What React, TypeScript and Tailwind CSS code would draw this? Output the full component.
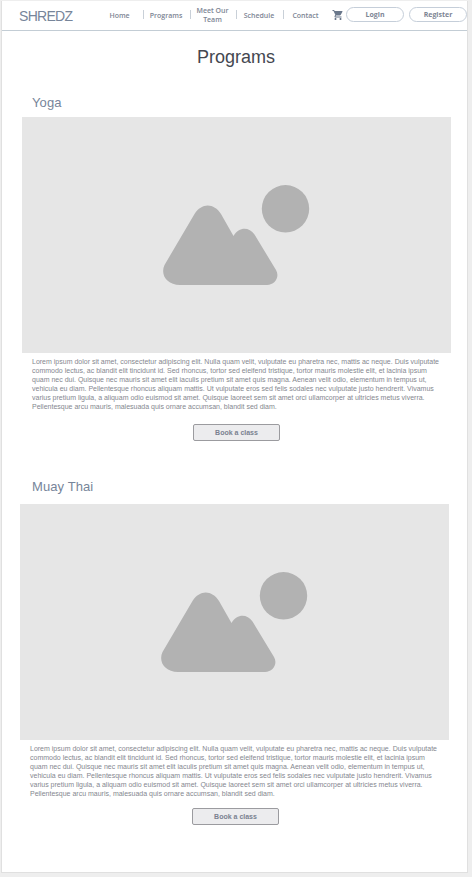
import React from 'react';

const lines = [
  'Lorem ipsum dolor sit amet, consectetur adipiscing elit. Nulla quam velit, vulputate eu pharetra nec, mattis ac neque. Duis vulputate',
  'commodo lectus, ac blandit elit tincidunt id. Sed rhoncus, tortor sed eleifend tristique, tortor mauris molestie elit, et lacinia ipsum',
  'quam nec dui. Quisque nec mauris sit amet elit iaculis pretium sit amet quis magna. Aenean velit odio, elementum in tempus ut,',
  'vehicula eu diam. Pellentesque rhoncus aliquam mattis. Ut vulputate eros sed felis sodales nec vulputate justo hendrerit. Vivamus',
  'varius pretium ligula, a aliquam odio euismod sit amet. Quisque laoreet sem sit amet orci ullamcorper at ultricies metus viverra.',
  'Pellentesque arcu mauris, malesuada quis ornare accumsan, blandit sed diam.',
];

function Placeholder() {
  return (
    <div className="h-[236px] w-[428.5px] bg-[#e6e6e6]">
      <svg width="428" height="236" viewBox="0 0 428 236" fill="#b2b2b2">
        <circle cx="263.5" cy="91.8" r="23.7" />
        <path d="M142.500 148L172.500 97C179.500 85.500 192 85.500 199 97L211.500 119C217 109.500 227 109.500 232.500 117.500L254 153C258 160 253 168 245 168H158C145 168 138 158 142.500 148Z" />
      </svg>
    </div>
  );
}

function Paragraph() {
  return (
    <p className="text-[7.01px] leading-[9px] text-[#85878f]">
      {lines.map((line) => (
        <span key={line} className="block whitespace-nowrap">{line}</span>
      ))}
    </p>
  );
}

function BookButton() {
  return (
    <button className="block h-[17px] w-[87px] rounded-[2px] border border-[#9b9b9f] bg-[#ececee] text-center text-[7px] leading-[14px] font-bold text-[#7a8190]">
      Book a class
    </button>
  );
}

function Divider() {
  return <span className="mt-[9px] h-[9px] w-px shrink-0 bg-[#c9d0d8]" />;
}

function Header() {
  return (
    <header className="flex h-[30px] border-b border-[#c3cdd5] font-['Open_Sans',sans-serif] text-[7px] leading-[9px] font-semibold text-[#7d8594]">
      <div className="w-[94px] pt-[6px] pl-[17px] font-['Liberation_Sans',sans-serif] text-[14px] leading-[18px] font-normal tracking-[-0.7px] text-[#77859a]">SHREDZ</div>
      <nav className="flex w-[233px] text-center">
        <span className="w-[47px] pt-[10px]">Home</span>
        <Divider />
        <span className="w-[46px] pt-[10px] pr-[2px]">Programs</span>
        <Divider />
        <span className="w-[45px] pt-[5px] pr-[2px]">Meet Our<br />Team</span>
        <Divider />
        <span className="w-[46px] pt-[10px] pr-[2px]">Schedule</span>
        <Divider />
        <span className="w-[45px] pt-[10px] pr-[2px]">Contact</span>
      </nav>
      <svg className="mt-[7.500px] ml-[3px] h-[12px] w-[12px] shrink-0" viewBox="0 0 24 24" fill="#69778b">
        <path d="M7 18c-1.100 0-1.990.9-1.990 2S5.900 22 7 22s2-.9 2-2-.9-2-2-2zM1 2v2h2l3.600 7.590-1.350 2.450c-.16.28-.25.61-.25.96 0 1.100.9 2 2 2h12v-2H7.420c-.14 0-.25-.11-.25-.25l.03-.12.900-1.630h7.450c.75 0 1.410-.41 1.750-1.030l3.580-6.490A1 1 0 0 0 20 4H5.210l-.94-2H1zm16 16c-1.100 0-1.990.9-1.990 2s.89 2 1.990 2 2-.9 2-2-.9-2-2-2z" />
      </svg>
      <button className="mt-[6px] ml-[2px] h-[15px] w-[58px] shrink-0 rounded-full border border-[#c5ced9] text-[7px] leading-[12px] font-bold">Login</button>
      <button className="mt-[6px] ml-[5px] h-[15px] w-[58px] shrink-0 rounded-full border border-[#c5ced9] text-[7px] leading-[12px] font-bold">Register</button>
    </header>
  );
}

export default function App() {
  return (
    <div className="h-[877px] w-[472px] bg-[#eeeeee] pt-px pl-[2px] font-['Liberation_Sans',sans-serif]">
      <div className="h-[872px] w-[466px] border-r border-b border-[#e0e0e0] bg-white shadow-[-1px_0_0_#e0e0e0]">
        <Header />
        <h1 className="pt-[14px] pl-[3px] text-center text-[18px] leading-[24px] text-[#444750]">Programs</h1>
        <section className="pt-[24px] pl-[20px]">
          <h2 className="h-[24px] pt-px pl-[10px] text-[13px] leading-[18px] tracking-[0.1px] text-[#77859a]">Yoga</h2>
          <Placeholder />
          <div className="pt-[4px] pl-[10px]"><Paragraph /></div>
          <div className="pt-[13px] pl-[171px]"><BookButton /></div>
        </section>
        <section className="pt-[36px] pl-[18px]">
          <h2 className="h-[27px] pt-px pl-[12px] text-[13px] leading-[18px] tracking-[0.1px] text-[#77859a]">Muay Thai</h2>
          <Placeholder />
          <div className="pt-[4px] pl-[10px]"><Paragraph /></div>
          <div className="pt-[10px] pl-[172px]"><BookButton /></div>
        </section>
      </div>
    </div>
  );
}
